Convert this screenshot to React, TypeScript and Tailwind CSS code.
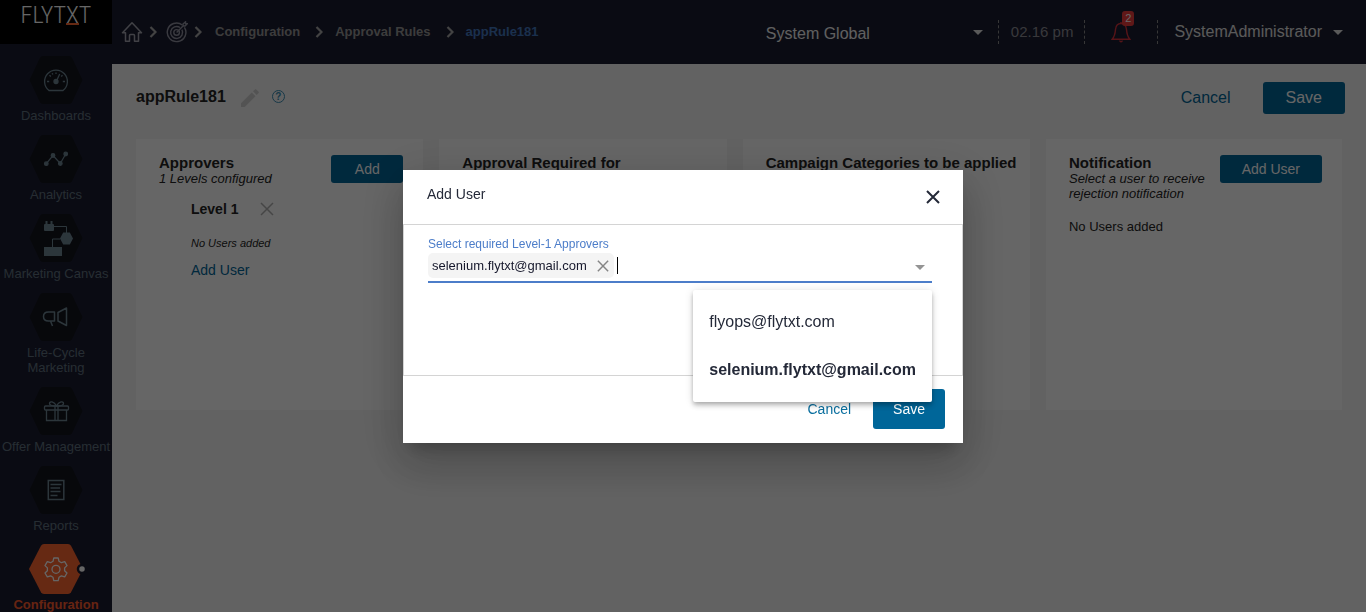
import React from "react";

const Home = () => (
  <svg width="22" height="22" viewBox="0 0 22 22" fill="none" stroke="#a3a4ae" strokeWidth="1.5">
    <path d="M1.5 11.8 11 1.8l9.500 10h-3v8.400h-4v-5.600q0-1-1-1h-3q-1 0-1 1v5.600h-4v-8.400z" strokeLinejoin="round" />
  </svg>
);

const Target = () => (
  <svg width="22" height="22" viewBox="0 0 22 22" fill="none" stroke="#9192a0" strokeWidth="1.4">
    <path d="M16.300 4A9.300 9.300 0 1 0 18.400 6.300" />
    <path d="M14 6.500A6 6 0 1 0 15.900 8.600" />
    <circle cx="10.600" cy="11.400" r="2.800" />
    <path d="M10.600 11.400 18 4M17 5V3L19.500.8v1.800h1.800L19 5z" />
  </svg>
);

const Chevron = () => (
  <svg width="8" height="12" viewBox="0 0 8 12" fill="none" stroke="#a8a8a8" strokeWidth="2.200">
    <path d="m1.500 1 5 5-5 5" />
  </svg>
);

const Caret = ({ color }: { color: string }) => (
  <svg width="10" height="5" viewBox="0 0 10 5" className="shrink-0">
    <path d="M0 0h10L5 5z" fill={color} />
  </svg>
);

const Cross = ({ size, color, weight }: { size: number; color: string; weight: number }) => (
  <svg width={size} height={size} viewBox="0 0 14 14" fill="none" stroke={color} strokeWidth={weight}>
    <path d="m1 1 12 12M13 1 1 13" />
  </svg>
);

const Bell = () => (
  <svg width="20" height="22" viewBox="0 0 20 22" fill="none" stroke="#d8323c" strokeWidth="1.400">
    <path d="M10 2.500C6.500 2.500 4.800 5 4.500 8.500 4.200 12.500 4 15 1.200 18.300h17.600C16 15 15.800 12.500 15.500 8.500 15.200 5 13.500 2.500 10 2.500z" />
    <path d="M8.800 19.500a1.200 1.200 0 0 0 2.400 0M10 1v1.500" />
  </svg>
);

const line = "#6f8795";
const icons = {
  gauge: (
    <g fill="none" stroke={line} strokeWidth="1.300">
      <path d="M7 24.500h14a11.400 11.400 0 1 0-14 0z" />
      <circle cx="14" cy="15.500" r="2" fill={line} />
      <path d="m14.500 15 3.200-7M5 15.500h2.200M20.800 15.500H23M14 6.500V8M7.500 9.300l1.300 1.200M20.500 9.300l-1.300 1.200M10.200 7.200l.6 1.400" />
    </g>
  ),
  analytics: (
    <g fill={line} stroke={line} strokeWidth="1.200">
      <path d="M4.300 18.700 11 10.500l7.300 8L23.700 9" fill="none" />
      <circle cx="4.300" cy="18.700" r="1.800" />
      <circle cx="11" cy="10.500" r="1.800" />
      <circle cx="18.300" cy="18.500" r="1.800" />
      <circle cx="23.700" cy="9" r="1.800" />
    </g>
  ),
  canvas: (
    <g fill={line}>
      <rect x="2" y="0" width="10" height="7" rx="1" />
      <rect x="3.500" y="-3" width="2" height="4" />
      <rect x="8.500" y="-3" width="2" height="4" />
      <path d="M21.200 8.500h6.600L31 14.500l-3.200 6h-6.600l-3.200-6z" />
      <rect x="2" y="23" width="18" height="9" />
      <path d="M12 2.500h12.500V9M18 15h-7.500v8" fill="none" stroke={line} strokeWidth="1" />
    </g>
  ),
  horn: (
    <g fill="none" stroke={line} strokeWidth="1.500" strokeLinejoin="round">
      <path d="M12.500 9H6.500C3 9 1.500 11 1.500 13.500S3 18 6.500 18h6zM16 9.500 24.500 5v17.500L16 18zM8.500 18l2 5M12.500 18h-2.500" />
    </g>
  ),
  gift: (
    <g fill="none" stroke={line} strokeWidth="1.300">
      <rect x="2.500" y="9" width="24" height="4" rx="1" />
      <path d="M4.500 13v10.500h20V13M13 9v14.500M16 9v14.500M14.500 9C12 4 7.500 4 7.500 6.500S11 9 14.500 9zM14.500 9c2.500-5 7-5 7-2.500S18 9 14.500 9z" />
    </g>
  ),
  report: (
    <g fill="none" stroke={line} strokeWidth="1.500">
      <rect x="6.300" y="4.500" width="15.500" height="19" />
      <path d="M8.500 8.500h11M8.500 12h9.500M8.500 15.500h10M8.500 19.500h7" />
    </g>
  ),
  gear: (
    <g fill="none" stroke="#fff" strokeWidth="1.300" strokeLinejoin="round">
      <path d="M11.800 3h4.400l.8 3.300 2.400 1.400 3.300-1 2.300 3.900-2.400 2.300v2.800l2.400 2.300-2.300 3.900-3.300-1-2.400 1.400-.8 3.300h-4.400l-.8-3.300-2.400-1.400-3.300 1L3 18l2.400-2.300v-2.800L3 10.600l2.300-3.900 3.300 1L11 6.300z" />
      <circle cx="14" cy="14.300" r="4" />
    </g>
  ),
};

const nav: { label: string; icon: keyof typeof icons; active?: boolean }[] = [
  { label: "Dashboards", icon: "gauge" },
  { label: "Analytics", icon: "analytics" },
  { label: "Marketing Canvas", icon: "canvas" },
  { label: "Life-Cycle Marketing", icon: "horn" },
  { label: "Offer Management", icon: "gift" },
  { label: "Reports", icon: "report" },
  { label: "Configuration", icon: "gear", active: true },
];

function NavItem({ label, icon, active }: (typeof nav)[number]) {
  return (
    <li>
      <a href="#" className={active ? "flex flex-col items-center gap-1 font-bold text-[#ff5a2c]" : "flex flex-col items-center gap-1 text-[#60727f]"}>
        <svg width="54" height="48" viewBox="0 0 54 48" className="overflow-visible">
          <path
            d={active ? "M15-1h24q2 0 3 1.700L54 24 42 47.300Q41 49 39 49H15q-2 0-3-1.700L0 24 12 .7Q13-1 15-1z" : "M14 0h26q2 0 3 1.700L53.500 24 43 46.300Q42 48 40 48H14q-2 0-3-1.700L.5 24 11 1.700Q12 0 14 0z"}
            fill={active ? "#ff6630" : "#13151d"}
          />
          <g transform="translate(13 10)">{icons[icon]}</g>
          {active && <circle cx="53" cy="24" r="4" fill="#fff" stroke="#1b1d31" strokeWidth="2.500" />}
        </svg>
        <span className="text-center text-[13px] leading-[15px]">
          {label === "Life-Cycle Marketing" ? <>Life-Cycle<br />Marketing</> : label}
        </span>
      </a>
    </li>
  );
}

function Card({ title, note, action, children }: { title: string; note?: React.ReactNode; action?: string; children?: React.ReactNode }) {
  return (
    <section className="min-h-[271px] min-w-0 bg-white pt-4 pr-5 pl-[23px]">
      <div className="flex justify-between">
        <div className="whitespace-nowrap">
          <h2 className="text-[15px] leading-4 font-bold">{title}</h2>
          {note && <p className="text-[13px] leading-[15px] italic">{note}</p>}
        </div>
        {action && <button className="h-7 min-w-[72px] shrink-0 rounded-[3px] bg-[#069] px-[22px] text-sm whitespace-nowrap text-white">{action}</button>}
      </div>
      {children}
    </section>
  );
}

const Divider = () => <span className="h-6 border-l border-dashed border-[#8a8a8a]" />;

export default function App() {
  return (
    <div className="flex h-screen overflow-hidden bg-[#f5f5f5] font-['Liberation_Sans',Arial,sans-serif] text-[#242424]">
      <aside className="w-28 shrink-0 bg-[#1b1d31]">
        <div className="flex h-11 justify-center bg-black">
          <span className="flex items-start font-['Roboto_Condensed','Liberation_Sans_Narrow','Liberation_Sans',sans-serif] text-2xl leading-[30px] font-light text-white">
            <span>FLYT</span>
            <span className="h-[25px] border-b-2 border-[#ff6630]">X</span>
            <span>T</span>
          </span>
        </div>
        <nav aria-label="Main">
          <ul className="flex flex-col gap-3 pt-3">
            {nav.map((n) => (
              <NavItem key={n.label} {...n} />
            ))}
          </ul>
        </nav>
      </aside>

      <div className="flex min-w-0 flex-1 flex-col">
        <header className="flex h-16 shrink-0 items-center bg-[#1b1d31] pr-[23px] pl-[9px]">
          <nav aria-label="Breadcrumb" className="flex flex-1 items-center text-[13px] font-bold text-[#979797]">
            <a href="#" aria-label="Home"><Home /></a>
            <span className="ml-[6px]"><Chevron /></span>
            <a href="#" aria-label="Campaigns" className="ml-[9px]"><Target /></a>
            <span className="ml-[6px]"><Chevron /></span>
            <a href="#" className="ml-[13px]">Configuration</a>
            <span className="mr-3 ml-[15px]"><Chevron /></span>
            <a href="#">Approval Rules</a>
            <span className="mr-3 ml-[15px]"><Chevron /></span>
            <a href="#" className="text-[#4378c0]">appRule181</a>
          </nav>
          <div className="flex items-center">
            <label className="flex w-[217px] items-center">
              <select aria-label="System" className="min-w-0 flex-1 appearance-none bg-transparent pt-[3px] text-base text-[#f0f0f0]">
                <option>System Global</option>
              </select>
              <Caret color="#e0e0e0" />
            </label>
            <span className="ml-[15px] flex"><Divider /></span>
            <span className="mr-[11px] ml-3 text-[15px] text-[#8d8d95]">02.16 pm</span>
            <Divider />
            <button aria-label="Notifications" className="relative mx-[26px]">
              <Bell />
              <span className="absolute -top-[10px] -right-[3px] h-[15px] w-3 rounded-[3px] bg-[#ee3c3c] text-center text-[11px] leading-[15px] text-white">2</span>
            </button>
            <Divider />
            <button className="ml-4 flex items-center gap-[11px] text-base text-[#e0e0e0]">
              SystemAdministrator
              <Caret color="#e0e0e0" />
            </button>
          </div>
        </header>

        <main className="flex-1 px-6">
          <div className="flex h-[75px] items-center pb-[7px]">
            <div className="flex items-center pb-[2px]">
              <h1 className="text-base font-bold">appRule181</h1>
              <button aria-label="Edit" className="ml-[15px] pt-[2px]">
                <svg width="18" height="18" viewBox="0 0 18 18" fill="#d0d0d0">
                  <path d="M0 14.300V18h3.700L14.500 7.200l-3.700-3.700zM17.600 4.100a1 1 0 0 0 0-1.400L15.300.4a1 1 0 0 0-1.400 0L12 2.300 15.700 6z" />
                </svg>
              </button>
              <button aria-label="Help" className="mb-[2px] ml-[13px] flex h-[13px] w-[13px] items-center justify-center rounded-full border border-[#3c8db3] text-[10px] leading-[11px] font-bold text-[#3c8db3]">?</button>
            </div>
            <button className="mr-8 ml-auto text-base text-[#069]">Cancel</button>
            <button className="-mr-[3px] h-8 rounded-[3px] bg-[#069] px-[23px] text-base text-white">Save</button>
          </div>
          <div className="grid grid-cols-[minmax(0,33fr)_minmax(0,33fr)_minmax(0,33fr)_minmax(0,34fr)] gap-4">
            <Card title="Approvers" note="1 Levels configured" action="Add">
              <div className="flex flex-col items-start pl-8">
                <div className="mt-[15px] flex items-center gap-[22px]">
                  <h3 className="text-sm leading-4 font-bold">Level 1</h3>
                  <button aria-label="Remove level"><Cross size={14} color="#b0b0b0" weight={1.5} /></button>
                </div>
                <p className="mt-[18px] text-[11px] leading-4 italic">No Users added</p>
                <a href="#" className="mt-[9px] text-sm leading-5 text-[#069]">Add User</a>
              </div>
            </Card>
            <Card title="Approval Required for" />
            <Card title="Campaign Categories to be applied" />
            <Card title="Notification" note={<>Select a user to receive<br />rejection notification</>} action="Add User">
              <p className="mt-4 text-[13px] leading-5">No Users added</p>
            </Card>
          </div>
        </main>
      </div>

      <div className="fixed inset-0 flex items-center justify-center bg-black/60 pt-px">
        <div
          role="dialog"
          aria-label="Add User"
          className="w-[560px] bg-white text-[#242938] shadow-[0_11px_15px_-7px_rgba(0,0,0,0.2),0_24px_38px_3px_rgba(0,0,0,0.14),0_9px_46px_8px_rgba(0,0,0,0.12)]"
        >
          <div className="flex h-[54px] items-center justify-between pr-[23px] pl-6">
            <h2 className="pb-[6px] text-sm">Add User</h2>
            <button aria-label="Close"><Cross size={14} color="#242938" weight={2} /></button>
          </div>
          <div className="h-[152px] border border-[#d4d4d4] pt-3 pr-[30px] pl-6">
            <div className="relative border-b-2 border-[#4c7dc9] pb-[3px]">
              <label htmlFor="approvers" className="mb-[2px] block text-xs leading-[14px] text-[#4c7dc9]">Select required Level-1 Approvers</label>
              <div className="flex items-center pr-[7px]">
                <span className="flex h-[25px] items-center gap-[10px] rounded-[5px] bg-[#f4f4f4] px-1 text-[13px] text-[#16182c]">
                  selenium.flytxt@gmail.com
                  <button aria-label="Remove" className="pr-px"><Cross size={12} color="#858585" weight={1.7} /></button>
                </span>
                <span className="ml-[3px] h-[17px] w-px bg-black" />
                <input id="approvers" className="min-w-0 flex-1 bg-transparent text-[13px] outline-none" />
                <span className="pt-[3px]"><Caret color="#949494" /></span>
              </div>
              <ul
                role="listbox"
                aria-label="Approvers"
                className="absolute top-full right-0 mt-[9px] rounded-[2px] bg-white py-2 text-base whitespace-nowrap shadow-[0_2px_4px_-1px_rgba(0,0,0,0.2),0_4px_5px_0_rgba(0,0,0,0.14),0_1px_10px_0_rgba(0,0,0,0.12)]"
              >
                <li role="option" aria-selected="false" className="px-4 leading-[48px]">flyops@flytxt.com</li>
                <li role="option" aria-selected="true" className="px-4 leading-[48px] font-bold">selenium.flytxt@gmail.com</li>
              </ul>
            </div>
          </div>
          <div className="flex h-[67px] items-center justify-end gap-[22px] pr-[18px] pb-px text-sm">
            <button className="text-[#0a6f9f]">Cancel</button>
            <button className="h-10 rounded-[3px] bg-[#069] px-5 text-white">Save</button>
          </div>
        </div>
      </div>
    </div>
  );
}
